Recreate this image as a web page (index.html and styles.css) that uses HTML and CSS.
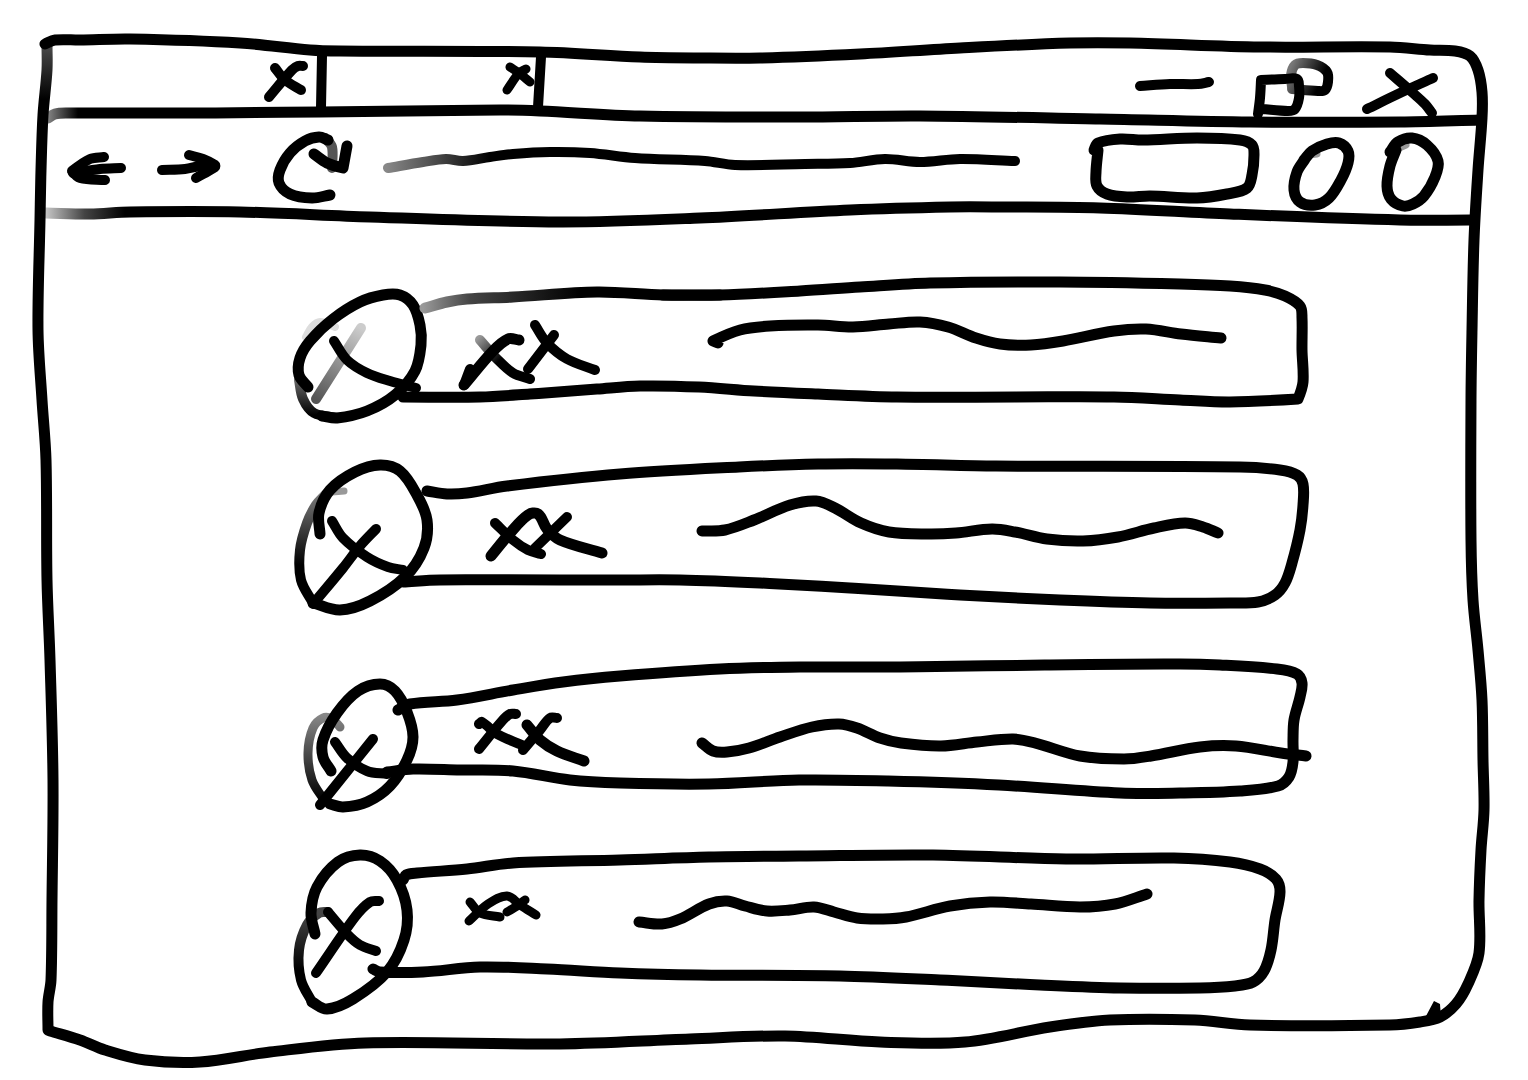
FILE: index.html
```html
<!DOCTYPE html>
<html lang="en">
<head>
<meta charset="utf-8">
<meta name="viewport" content="width=device-width, initial-scale=1">
<title>Browser wireframe</title>
<link rel="stylesheet" href="styles.css">
<script src="sketch.js" defer></script>
</head>
<body>
<svg class="defs" aria-hidden="true">
  <defs>
    <linearGradient id="fade-left" gradientUnits="userSpaceOnUse" x1="47" y1="0" x2="78" y2="0"><stop offset="0" stop-color="#888"/><stop offset="1" stop-color="#000"/></linearGradient>
    <linearGradient id="fade-rule" gradientUnits="userSpaceOnUse" x1="44" y1="0" x2="125" y2="0"><stop offset="0" stop-color="#ccc"/><stop offset="0.5" stop-color="#444"/><stop offset="1" stop-color="#000"/></linearGradient>
    <linearGradient id="fade-address" gradientUnits="userSpaceOnUse" x1="386" y1="0" x2="490" y2="0"><stop offset="0" stop-color="#888"/><stop offset="0.4" stop-color="#555"/><stop offset="1" stop-color="#000"/></linearGradient>
    <linearGradient id="fade-card" gradientUnits="userSpaceOnUse" x1="423" y1="0" x2="580" y2="0"><stop offset="0" stop-color="#999"/><stop offset="0.3" stop-color="#444"/><stop offset="1" stop-color="#000"/></linearGradient>
    <linearGradient id="fade-frame" gradientUnits="userSpaceOnUse" x1="0" y1="50" x2="0" y2="100"><stop offset="0" stop-color="#444"/><stop offset="1" stop-color="#000"/></linearGradient>
    <linearGradient id="fade-restore" gradientUnits="userSpaceOnUse" x1="1292" y1="64" x2="1322" y2="78"><stop offset="0" stop-color="#777"/><stop offset="1" stop-color="#000"/></linearGradient>
    <linearGradient id="fade-slash" gradientUnits="userSpaceOnUse" x1="361" y1="328" x2="316" y2="399"><stop offset="0" stop-color="#ccc"/><stop offset="1" stop-color="#555"/></linearGradient>
    <linearGradient id="fade-name" gradientUnits="userSpaceOnUse" x1="478" y1="338" x2="500" y2="360"><stop offset="0" stop-color="#999"/><stop offset="1" stop-color="#000"/></linearGradient>
    <linearGradient id="fade-ring-1" gradientUnits="userSpaceOnUse" x1="0" y1="375" x2="0" y2="415"><stop offset="0" stop-color="#777"/><stop offset="1" stop-color="#000"/></linearGradient>
    <linearGradient id="fade-ring-2" gradientUnits="userSpaceOnUse" x1="0" y1="495" x2="0" y2="565"><stop offset="0" stop-color="#777"/><stop offset="1" stop-color="#000"/></linearGradient>
    <linearGradient id="fade-ring-3" gradientUnits="userSpaceOnUse" x1="0" y1="715" x2="0" y2="800"><stop offset="0" stop-color="#888"/><stop offset="1" stop-color="#000"/></linearGradient>
    <linearGradient id="fade-ring-4" gradientUnits="userSpaceOnUse" x1="0" y1="915" x2="0" y2="970"><stop offset="0" stop-color="#444"/><stop offset="1" stop-color="#000"/></linearGradient>
  </defs>
</svg>

<div class="browser">
  <svg class="frame" viewBox="0 0 1528 1080" preserveAspectRatio="none" aria-hidden="true">
    <polyline stroke="url(#fade-frame)" points="47,45 47,70 43,115 41,170 40,220 38,330 42,400 46,460 47,580 50,660 53,780 52,900 51,980 48,1002 48,1030"/>
    <polyline points="45,44 55,40 80,40 130,39 240,43 310,50 340,51 540,52 640,57 700,58 760,58 860,54 960,48 1070,43 1130,43 1260,47 1390,47 1430,50 1455,51 1470,56 1478,70 1482,92 1482,118 1478,170 1474,240 1472,330 1471,400 1471,540 1473,600 1478,650 1482,700 1483,760 1484,810 1481,850 1479,900 1479,953 1468,984 1456,1004 1440,1017 1420,1022 1390,1025 1250,1025 1195,1020 1110,1020 1050,1027 965,1042 880,1042 785,1036 690,1039 560,1044 365,1043 270,1052 200,1062 145,1060 105,1050 80,1040 50,1031"/>
    <path class="fill" d="M1434 1001L1426 1016L1441 1018L1440 1004Z"/>
  </svg>

  <header class="tabstrip">
    <div class="tab tab-wide">
      <button class="icon tab-close" type="button" aria-label="Close first tab">
        <svg viewBox="266 48 48 60"><polyline class="mid" points="275,68 285,80 301,90"/><polyline class="mid" points="269,97 292,70 298,66 303,66"/></svg>
      </button>
      <svg class="tab-edge" viewBox="314 48 16 60" aria-hidden="true"><polyline class="mid" points="322,56 321,107"/></svg>
    </div>
    <div class="tab">
      <button class="icon tab-close" type="button" aria-label="Close second tab">
        <svg viewBox="486 48 48 60"><polyline class="soft" points="510,67 519,73 530,82"/><polyline class="soft" points="507,90 519,73 526,69"/></svg>
      </button>
      <svg class="tab-edge" viewBox="534 48 16 60" aria-hidden="true"><polyline class="mid" points="541,57 538,107"/></svg>
    </div>
    <div class="window-controls">
      <button class="icon control" type="button" aria-label="Minimise">
        <svg viewBox="1136 48 80 60"><polyline class="mid" points="1140,86 1170,84 1198,84 1209,82"/></svg>
      </button>
      <button class="icon control" type="button" aria-label="Restore">
        <svg viewBox="1248 48 80 60"><polyline class="mid" stroke="url(#fade-restore)" points="1292,87 1291,75 1295,65 1303,63 1317,65 1327,72 1328,82 1325,90 1318,91 1292,89"/><polyline class="mid" points="1258,114 1260,98 1261,80 1261,80 1285,79 1297,79 1299,86 1299,98 1295,109 1288,111 1262,109"/></svg>
      </button>
      <button class="icon control" type="button" aria-label="Close window">
        <svg viewBox="1360 48 80 60"><polyline class="mid" points="1390,73 1413,93 1425,104 1432,113"/><polyline class="mid" points="1367,109 1400,93 1433,78"/></svg>
      </button>
    </div>
  </header>
  <svg class="rule" viewBox="40 108 1448 20" preserveAspectRatio="none" aria-hidden="true"><polyline stroke="url(#fade-left)" points="48,118 55,114 66,113 200,113 320,112 500,110 540,111 640,116 800,117 920,116 1100,119 1250,122 1400,122 1480,120"/></svg>

  <nav class="toolbar" aria-label="Navigation">
    <button class="icon nav" type="button" aria-label="Back">
      <svg viewBox="64 128 64 76"><polyline class="mid" points="121,168 100,169 73,173"/><polyline class="mid" points="104,157 90,159 72,171 72,171 80,178 105,180"/></svg>
    </button>
    <button class="icon nav" type="button" aria-label="Forward">
      <svg viewBox="152 128 64 76"><polyline class="mid" points="162,170 185,169 200,166 213,165"/><polyline class="mid" points="189,155 203,159 215,165 215,167 196,178"/></svg>
    </button>
    <button class="icon reload" type="button" aria-label="Reload">
      <svg viewBox="240 128 120 76"><polyline class="mid faint" points="325,138 332,147 332,168"/><polyline points="330,195 312,198 290,194 279,183 280,170 290,153 305,141 319,137 328,140"/><polyline points="314,154 327,163 343,168 343,168 347,146"/></svg>
    </button>
    <label class="address">
      <svg viewBox="384 128 640 76" preserveAspectRatio="none" aria-hidden="true"><polyline class="mid" stroke="url(#fade-address)" points="388,168 423,162 446,159 463,161 490,157 513,154 550,152 590,153 635,158 705,161 735,165 805,164 850,163 885,159 920,162 960,159 1015,161"/></svg>
      <input type="text" aria-label="Address">
    </label>
    <div class="actions">
      <button class="icon action" type="button" aria-label="Action">
        <svg viewBox="1088 128 176 76"><polyline points="1094,150 1098,143 1120,139 1143,140 1197,138 1240,140 1252,145 1254,155 1252,175 1247,188 1227,194 1197,198 1150,196 1127,197 1107,194 1097,186 1096,172 1098,150"/></svg>
      </button>
      <button class="icon round" type="button" aria-label="Profile">
        <svg viewBox="1288 128 64 76"><polyline class="stub" points="1308,155 1317,154"/><polyline points="1305,159 1297,172 1294,190 1300,202 1315,205 1329,198 1341,180 1348,163 1348,151 1339,143 1327,144 1312,151 1304,160"/></svg>
      </button>
      <button class="icon round" type="button" aria-label="Menu">
        <svg viewBox="1376 128 64 76"><polyline class="stub" points="1397,149 1406,145"/><polyline points="1390,152 1398,142 1412,138 1427,145 1438,161 1435,177 1424,196 1413,204 1403,206 1391,199 1387,186 1390,166 1396,150"/></svg>
      </button>
    </div>
  </nav>
  <svg class="rule" viewBox="40 204 1448 20" preserveAspectRatio="none" aria-hidden="true"><polyline stroke="url(#fade-rule)" points="46,213 90,214 130,212 240,212 370,217 560,222 700,218 850,210 950,207 1000,207 1100,208 1230,214 1400,220 1470,220"/></svg>

  <main>
    <ul class="list">
      <li class="row">
        <svg class="card" viewBox="288 264 1024 176" preserveAspectRatio="none" aria-hidden="true"><polyline stroke="url(#fade-card)" points="425,308 447,302 467,299 513,297 597,292 663,295 720,295"/><polyline points="663,295 720,295 800,291 860,287 930,283 1060,282 1180,284 1230,286 1265,290 1285,296 1300,306 1302,318 1302,350 1303,382 1298,399 1298,399 1230,402 1180,400 1114,397 1015,397 897,397 818,394 754,391 699,387 640,386 597,389 530,394 480,397 403,397"/></svg>
        <svg class="avatar" viewBox="288 264 160 176" aria-hidden="true"><polyline class="ghost" points="306,337 312,327 320,322 335,327"/><polyline class="mid" stroke="url(#fade-slash)" points="361,328 316,399"/><polyline class="mid" stroke="url(#fade-ring-1)" points="299,380 303,399 314,413 337,418"/><polyline points="308,387 299,375 300,358 310,341 333,319 360,302 383,295 400,295 413,305 420,325 421,345 415,371 395,395 367,411 337,418 322,416"/><polyline class="mid" points="334,341 347,360 367,373 390,381 416,388"/></svg>
        <svg class="name" viewBox="448 264 176 176" aria-hidden="true"><polyline class="mid" stroke="url(#fade-name)" points="480,340 497,359 513,373 530,379"/><polyline points="464,385 493,351 508,339 519,340"/><polyline class="mid" points="470,369 464,385"/><polyline class="mid" points="535,325 547,343 567,359 595,370"/><polyline class="mid" points="554,335 528,369"/></svg>
        <svg class="line" viewBox="624 264 688 176" preserveAspectRatio="none" aria-hidden="true"><polyline points="718,343 713,341 713,341 740,330 770,326 818,325 853,327 889,324 920,322 948,327 976,338 1000,344 1031,345 1063,341 1114,331 1146,329 1181,334 1221,338"/></svg>
      </li>
      <li class="row">
        <svg class="card" viewBox="288 456 1024 176" preserveAspectRatio="none" aria-hidden="true"><polyline points="427,491 447,494 467,493 507,486 620,474 739,467 818,464 897,464 996,466 1240,467 1280,470 1297,475 1303,484 1303,505 1300,530 1292,563 1285,583 1275,595 1258,602 1230,603 1150,603 1060,600 960,595 850,588 760,583 680,580 620,580 440,580 403,582"/></svg>
        <svg class="avatar" viewBox="288 456 160 176" aria-hidden="true"><polyline class="stub" points="332,492 344,491"/><polyline class="mid" stroke="url(#fade-ring-2)" points="325,495 316,505 307,523 300,550 301,580 313,603"/><polyline points="320,534 319,513 330,490 355,472 380,465 400,471 417,495 427,520 424,548 405,577 370,601 340,610 313,603"/><polyline class="mid" points="332,521 343,538 367,557 388,567 403,570"/><polyline class="mid" points="376,529 360,546 343,568 313,604"/></svg>
        <svg class="name" viewBox="448 456 176 176" aria-hidden="true"><polyline class="mid" points="495,523 513,540 528,550 541,554"/><polyline points="491,556 510,533 528,515 538,514 547,529 560,540 602,553"/><polyline class="mid" points="567,517 535,548"/></svg>
        <svg class="line" viewBox="624 456 688 176" preserveAspectRatio="none" aria-hidden="true"><polyline points="702,531 725,530 754,520 790,505 816,501 835,508 861,523 889,532 928,534 956,533 992,529 1015,532 1047,539 1083,541 1118,537 1154,528 1185,523 1203,527 1218,533"/></svg>
      </li>
      <li class="row">
        <svg class="card" viewBox="288 648 1024 176" preserveAspectRatio="none" aria-hidden="true"><polyline points="398,710 410,704 457,700 513,690 563,682 620,676 720,669 800,667 900,667 1050,665 1180,664 1220,665 1277,669 1297,674 1302,683 1300,697 1294,720 1293,740 1293,762 1289,777 1278,786 1240,791 1180,793 1120,793 999,785 888,781 799,780 709,784 620,783 570,780 513,771 460,770 413,769 387,772"/></svg>
        <svg class="avatar" viewBox="288 648 160 176" aria-hidden="true"><polyline class="soft" stroke="url(#fade-ring-3)" points="340,727 332,719 323,718 313,728 308,753 312,780 324,800"/><polyline points="331,771 323,757 323,740 337,713 358,691 380,684 395,691 407,712 413,737 407,760 390,786 367,802 343,807 330,804"/><polyline class="mid" points="335,742 347,758 367,771 387,774"/><polyline class="mid" points="373,739 320,805"/></svg>
        <svg class="name" viewBox="448 648 176 176" aria-hidden="true"><polyline class="mid" points="479,724 482,722 497,734 522,745"/><polyline class="mid" points="479,749 502,721 510,714 516,714"/><polyline points="527,725 540,740 557,751 584,761"/><polyline class="mid" points="557,718 550,718 540,730 523,750"/></svg>
        <svg class="line" viewBox="624 648 688 176" preserveAspectRatio="none" aria-hidden="true"><polyline points="702,743 713,751 727,752 749,748 780,737 812,727 839,724 857,728 880,738 901,743 941,746 977,742 1013,739 1035,743 1080,756 1124,759 1151,756 1200,747 1236,746 1281,753 1306,756"/></svg>
      </li>
      <li class="row">
        <svg class="card" viewBox="288 840 1024 176" preserveAspectRatio="none" aria-hidden="true"><polyline points="403,880 406,875 417,873 467,869 513,863 620,860 709,857 799,856 933,855 1066,859 1174,858 1230,862 1260,869 1276,879 1280,892 1275,920 1271,950 1264,971 1253,982 1235,986 1200,988 1120,988 1040,985 940,980 840,976 700,975 620,973 547,969 480,967 423,972 380,972 373,969"/></svg>
        <svg class="avatar" viewBox="288 840 160 176" aria-hidden="true"><polyline class="mid" stroke="url(#fade-ring-4)" points="312,1002 301,980 299,950 307,925 319,913 328,912"/><polyline class="mid" points="328,912 347,934 360,945 376,951"/><polyline points="315,934 311,913 317,887 338,862 360,855 380,861 397,880 407,910 404,940 387,972 353,999 327,1009 312,1002"/><polyline class="mid" points="379,901 370,902 355,917 316,973"/></svg>
        <svg class="name" viewBox="448 840 176 176" aria-hidden="true"><polyline class="soft" points="470,902 480,913 500,917"/><polyline class="soft" points="469,921 488,904 507,896 520,905 536,915"/><polyline class="soft" points="525,900 517,906 507,912"/></svg>
        <svg class="line" viewBox="624 840 688 176" preserveAspectRatio="none" aria-hidden="true"><polyline points="639,922 662,924 680,919 709,904 727,901 745,906 767,911 790,910 814,907 834,912 857,918 883,919 906,917 950,906 990,902 1031,904 1080,907 1115,904 1147,894"/></svg>
      </li>
    </ul>
  </main>
</div>
</body>
</html>
```
FILE: styles.css
```css
* {
  box-sizing: border-box;
}

body {
  margin: 0;
  background: #fff;
  color: #000;
  font-family: "Liberation Sans", sans-serif;
}

svg {
  display: block;
  overflow: visible;
  fill: none;
  stroke: #000;
  stroke-width: 11px;
  stroke-linecap: round;
  stroke-linejoin: round;
}

svg * {
  vector-effect: non-scaling-stroke;
}

.defs {
  position: absolute;
  width: 0;
  height: 0;
}

.mid {
  stroke-width: 10px;
}

.soft {
  stroke-width: 9px;
}

.faint {
  stroke: #555;
}

.stub {
  stroke: #999;
  stroke-width: 7px;
}

.ghost {
  stroke: #ddd;
  stroke-width: 8px;
}

.fill {
  fill: #000;
  stroke: none;
}

.browser {
  position: relative;
  min-height: 100vh;
  padding: 48px 40px 64px;
}

.frame,
.card {
  position: absolute;
  inset: 0;
  width: 100%;
  height: 100%;
  pointer-events: none;
}

.icon {
  padding: 0;
  border: 0;
  background: none;
  cursor: pointer;
}

.icon svg {
  width: 100%;
  height: 100%;
}

.tabstrip {
  display: flex;
  height: 60px;
  padding-right: 48px;
}

.tab {
  display: flex;
  justify-content: flex-end;
  width: 220px;
}

.tab-wide {
  width: 290px;
}

.tab-close {
  width: 48px;
}

.tab-edge {
  width: 16px;
  height: 60px;
}

.window-controls {
  display: flex;
  gap: 32px;
  margin-left: auto;
}

.control {
  width: 80px;
}

.rule {
  width: 100%;
  height: 20px;
}

.toolbar {
  display: flex;
  gap: 24px;
  height: 76px;
  padding: 0 48px 0 24px;
}

.nav,
.round {
  width: 64px;
}

.reload {
  width: 120px;
}

.address {
  position: relative;
  flex: 1;
  min-width: 0;
}

.address svg {
  width: 100%;
  height: 100%;
}

.address input {
  position: absolute;
  inset: 0;
  width: 100%;
  border: 0;
  background: transparent;
  font: inherit;
}

.actions {
  display: flex;
  gap: 24px;
  margin-left: 40px;
}

.action {
  width: 176px;
}

.list {
  display: grid;
  gap: 16px;
  margin: 0;
  padding: 40px 176px 0 248px;
  list-style: none;
}

.row {
  position: relative;
  display: grid;
  grid-template-columns: 160px 176px 1fr;
  height: 176px;
}

.avatar,
.name,
.line {
  width: 100%;
  height: 100%;
}
```
FILE: sketch.js
```js
// Turns every polyline into a smooth pen stroke through the same points.
// A repeated point keeps a sharp corner.
function smooth(points) {
  const tangents = points.map((p, i) => {
    const a = points[Math.max(i - 1, 0)];
    const b = points[Math.min(i + 1, points.length - 1)];
    const same = (q) => i > 0 && i < points.length - 1 && q[0] === p[0] && q[1] === p[1];
    const length = Math.hypot(b[0] - a[0], b[1] - a[1]);
    if (same(a) || same(b) || !length) return [0, 0];
    return [(b[0] - a[0]) / length, (b[1] - a[1]) / length];
  });
  let d = `M${points[0]}`;
  for (let i = 1; i < points.length; i++) {
    const [p, q] = [points[i - 1], points[i]];
    const [s, t] = [tangents[i - 1], tangents[i]];
    const h = Math.hypot(q[0] - p[0], q[1] - p[1]) / 3;
    d += `C${p[0] + s[0] * h},${p[1] + s[1] * h} ${q[0] - t[0] * h},${q[1] - t[1] * h} ${q}`;
  }
  return d;
}

document.querySelectorAll("polyline").forEach((line) => {
  const points = line.getAttribute("points").trim().split(/\s+/).map((p) => p.split(",").map(Number));
  const path = document.createElementNS("http://www.w3.org/2000/svg", "path");
  for (const { name, value } of line.attributes) {
    if (name !== "points") path.setAttribute(name, value);
  }
  path.setAttribute("d", smooth(points));
  line.replaceWith(path);
});
```
